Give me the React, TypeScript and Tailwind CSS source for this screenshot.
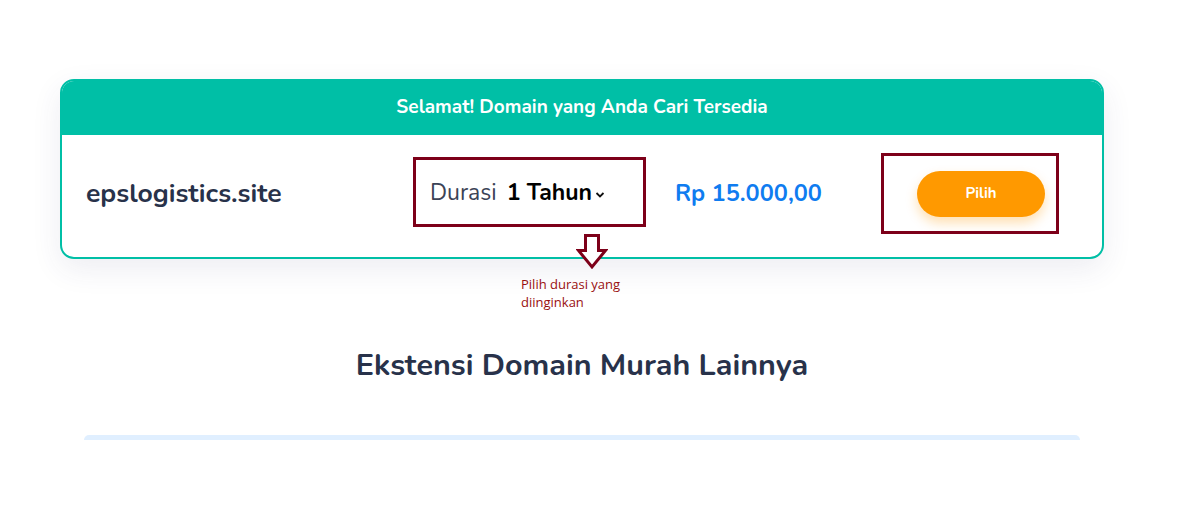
import React from "react";

const AnnotationArrow = () => (
  <svg width="32" height="36" viewBox="0 0 32 36" className="absolute left-[516px] top-[155px]">
    <path
      d="M9.5 1.5 H22.5 V16.5 H29.5 L16 33 L2.5 16.5 H9.5 Z"
      fill="white"
      stroke="#7d0019"
      strokeWidth="3"
      strokeLinejoin="miter"
    />
  </svg>
);

const App = () => {
  return (
    <div className="h-[505px] w-[1192px] overflow-hidden bg-white font-['Nunito','Lato',sans-serif]">
      <div className="w-[1164px] px-[60px] pt-[79px]">
        {/* Kartu hasil pencarian domain */}
        <div className="relative">
          <div className="overflow-hidden rounded-[14px] border-2 border-[#00bfa6] bg-white shadow-[0_10px_30px_rgba(60,60,110,0.09)]">
            <div className="flex h-[54px] items-center justify-center bg-[#00bfa6] pb-[2px] text-[19px] font-bold text-white">
              Selamat! Domain yang Anda Cari Tersedia
            </div>
            <div className="flex h-[122px] items-center pb-[5px] pl-[24px]">
              <div className="w-[327px] text-[26.5px] font-bold text-[#28324a]">epslogistics.site</div>
              <div className="flex w-[262px] items-center pl-[17px]">
                <span className="text-[23px] text-[#3b4356]">Durasi</span>
                <span className="ml-[10px] text-[23px] font-bold text-black">1 Tahun</span>
                <svg width="10" height="8" viewBox="0 0 10 8" className="ml-[3px] mt-[2px]">
                  <path d="M1.5 2 L5 5.5 L8.5 2" fill="none" stroke="#111" strokeWidth="1.8" />
                </svg>
              </div>
              <div className="w-[242px] text-[23.5px] font-bold text-[#0f7cf0]">Rp 15.000,00</div>
              <button className="h-[46px] w-[128px] rounded-full bg-[#ff9900] text-[15px] font-bold text-white shadow-[0_6px_12px_rgba(255,153,0,0.3)]">
                Pilih
              </button>
            </div>
          </div>

          {/* Anotasi */}
          <div className="absolute left-[353px] top-[78px] h-[70px] w-[233px] border-[3px] border-[#7d0019]" />
          <div className="absolute left-[821px] top-[74px] h-[81px] w-[178px] border-[3px] border-[#7d0019]" />
          <AnnotationArrow />
          <div className="absolute left-[461px] top-[196px] w-[130px] font-['Open_Sans',sans-serif] text-[13px] leading-[18px] text-[#990f0f]">
            Pilih durasi yang diinginkan
          </div>
        </div>

        <h2 className="mt-[84px] text-center text-[30.5px] font-bold text-[#28324a]">Ekstensi Domain Murah Lainnya</h2>

        <div className="mx-[24px] mt-[46px] h-[5px] rounded-t-[24px] bg-[#e0efff]" />
      </div>
    </div>
  );
};

export default App;
